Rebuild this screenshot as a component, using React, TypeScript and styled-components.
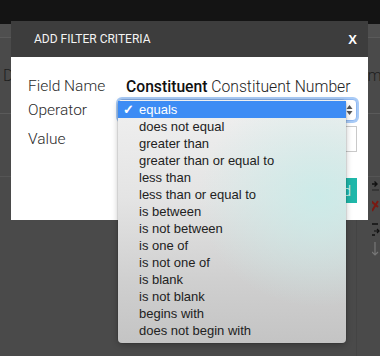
import React from "react";
import styled, { createGlobalStyle } from "styled-components";

const operators = [
  "equals",
  "does not equal",
  "greater than",
  "greater than or equal to",
  "less than",
  "less than or equal to",
  "is between",
  "is not between",
  "is one of",
  "is not one of",
  "is blank",
  "is not blank",
  "begins with",
  "does not begin with",
];

const App = () => {
  return (
    <Page>
      <GlobalStyle />
      <TopBar />
      <Band />
      <HeaderRow>
        <span>Date</span>
        <span>Name</span>
      </HeaderRow>
      <TableRow />
      <ToolRow>
        <Divider />
        <Tools>
          <svg width="10" height="14" viewBox="0 0 10 14">
            <path d="M0 5 H7 M4.5 2.5 L7 5 L4.5 7.5" stroke="#111" strokeWidth="1.4" fill="none" />
            <path d="M0 11 H9" stroke="#222" strokeWidth="1" />
          </svg>
          <svg width="10" height="14" viewBox="0 0 10 14">
            <path d="M1 2 L8 8 M8 2 L2 12" stroke="#7a1a12" strokeWidth="2" fill="none" />
          </svg>
          <svg width="10" height="14" viewBox="0 0 10 14">
            <path d="M8 1 H1 V12 H5" stroke="#111" strokeWidth="1.4" fill="none" />
            <path d="M4 8 H9 M7 6 L9 8 L7 10" stroke="#111" strokeWidth="1.2" fill="none" />
          </svg>
          <svg width="10" height="16" viewBox="0 0 10 16">
            <path d="M5 1 V14 M2 11 L5 14 L8 11" stroke="#777" strokeWidth="1.2" fill="none" />
          </svg>
        </Tools>
      </ToolRow>

      <Modal>
        <ModalHead>
          <Title>ADD FILTER CRITERIA</Title>
          <Close>X</Close>
        </ModalHead>
        <ModalBody>
          <Row>
            <Label>Field Name</Label>
            <FieldValue>
              <b>Constituent</b> Constituent Number
            </FieldValue>
          </Row>
          <Row>
            <Label>Operator</Label>
            <Select>
              <Arrows>
                <svg width="7" height="12" viewBox="0 0 7 12">
                  <path d="M3.5 1 L6.5 5 H0.5 Z" fill="#555" />
                  <path d="M3.5 11 L6.5 7 H0.5 Z" fill="#555" />
                </svg>
              </Arrows>
            </Select>
          </Row>
          <Row $tall>
            <Label>Value</Label>
            <Input />
          </Row>
          <Actions>
            <Button>Add</Button>
          </Actions>
        </ModalBody>
      </Modal>

      <Menu>
        {operators.map((op, i) => (
          <Item key={op} $active={i === 0}>
            <Check>{i === 0 ? "✓" : ""}</Check>
            {op}
          </Item>
        ))}
      </Menu>
    </Page>
  );
};

export default App;

const GlobalStyle = createGlobalStyle`
  html, body {
    margin: 0;
    padding: 0;
    background: #4a4a4a;
    overflow: hidden;
  }
`;

const Page = styled.div`
  position: relative;
  width: 380px;
  height: 356px;
  background: #4a4a4a;
  font-family: Roboto, "Liberation Sans", sans-serif;
  overflow: hidden;
`;

const TopBar = styled.div`
  height: 24px;
  background: #141414;
`;

const Band = styled.div`
  height: 13px;
  background: #4f4f4f;
  border-bottom: 1px solid #5a5a5a;
`;

const HeaderRow = styled.div`
  height: 75px;
  display: flex;
  justify-content: space-between;
  align-items: center;
  padding: 0 0 0 3px;
  margin-right: -10px;
  font-size: 16px;
  font-weight: 300;
  color: #1e1e1e;
  border-bottom: 1px solid #5a5a5a;
`;

const TableRow = styled.div`
  height: 62px;
  border-bottom: 1px solid #555;
`;

const ToolRow = styled.div`
  display: flex;
  justify-content: flex-end;
  height: 180px;
`;

const Divider = styled.div`
  width: 15px;
  border-left: 1px solid #444;
`;

const Tools = styled.div`
  width: 8px;
  overflow: hidden;
  display: flex;
  flex-direction: column;
  gap: 4px;
  padding-top: 2px;

  svg {
    margin-left: -2px;
  }

  svg:nth-child(2) {
    margin-top: 2px;
  }

  svg:nth-child(3) {
    margin-top: 6px;
  }
`;

const Modal = styled.div`
  position: absolute;
  left: 11px;
  top: 21px;
  width: 357px;
  background: #fff;
`;

const ModalHead = styled.div`
  height: 36px;
  background: #3d3d3d;
  display: flex;
  align-items: center;
  justify-content: space-between;
  padding: 0 11px 0 23px;
`;

const Title = styled.div`
  color: #f4f4f4;
  font-size: 12px;
  font-weight: 400;
`;

const Close = styled.div`
  color: #fff;
  font-size: 13px;
  font-weight: 700;
  font-family: "Liberation Sans", Arial, sans-serif;
`;

const ModalBody = styled.div`
  padding: 17px 11px 17px 17px;
  display: flex;
  flex-direction: column;
`;

const Row = styled.div<{ $tall?: boolean }>`
  display: flex;
  align-items: center;
  height: ${(p) => (p.$tall ? "26px" : "24px")};
  margin-top: ${(p) => (p.$tall ? "4px" : "0")};
`;

const Label = styled.div`
  width: 90px;
  flex: none;
  font-size: 15.5px;
  font-weight: 300;
  color: #2a2a2a;
`;

const FieldValue = styled.div`
  padding-left: 8px;
  font-size: 15.7px;
  font-weight: 300;
  color: #222;
  white-space: nowrap;

  b {
    font-weight: 500;
    color: #111;
  }
`;

const Select = styled.div`
  position: relative;
  flex: 1;
  height: 20px;
  border: 1px solid #8fb8f2;
  border-radius: 4px;
  box-shadow: 0 0 0 2px #a9cbf6;
  background: #fff;
`;

const Arrows = styled.div`
  position: absolute;
  right: 3px;
  top: 4px;
  display: flex;
`;

const Input = styled.div`
  flex: 1;
  height: 24px;
  border: 1px solid #c9c9c9;
`;

const Actions = styled.div`
  display: flex;
  justify-content: flex-end;
  margin-top: 26px;
`;

const Button = styled.div`
  height: 25px;
  padding: 0 6px 0 20px;
  background: #1fb7a9;
  color: #e8fbf8;
  font-size: 15px;
  font-weight: 300;
  display: flex;
  align-items: center;
`;

const Menu = styled.div`
  position: absolute;
  left: 118px;
  top: 100px;
  width: 228px;
  padding: 1px 0 4px;
  border-radius: 4px;
  background:
    radial-gradient(ellipse 120px 110px at 88% 40%, rgba(200, 236, 233, 0.85), rgba(200, 236, 233, 0) 100%),
    linear-gradient(to bottom, #f0f0f0 0%, #e4e4e4 40%, #cfcfcf 75%, #c4c4c4 100%);
  box-shadow: 0 2px 6px rgba(0, 0, 0, 0.25), 0 0 0 0.5px rgba(0, 0, 0, 0.15);
  font-family: "Liberation Sans", Arial, sans-serif;
`;

const Item = styled.div<{ $active?: boolean }>`
  height: 17px;
  display: flex;
  align-items: center;
  font-size: 13px;
  color: ${(p) => (p.$active ? "#fff" : "#222")};
  background: ${(p) => (p.$active ? "#3d8cf4" : "transparent")};
  white-space: nowrap;
`;

const Check = styled.span`
  width: 21px;
  padding-left: 5px;
  box-sizing: border-box;
  font-size: 13px;
  font-weight: 700;
`;
